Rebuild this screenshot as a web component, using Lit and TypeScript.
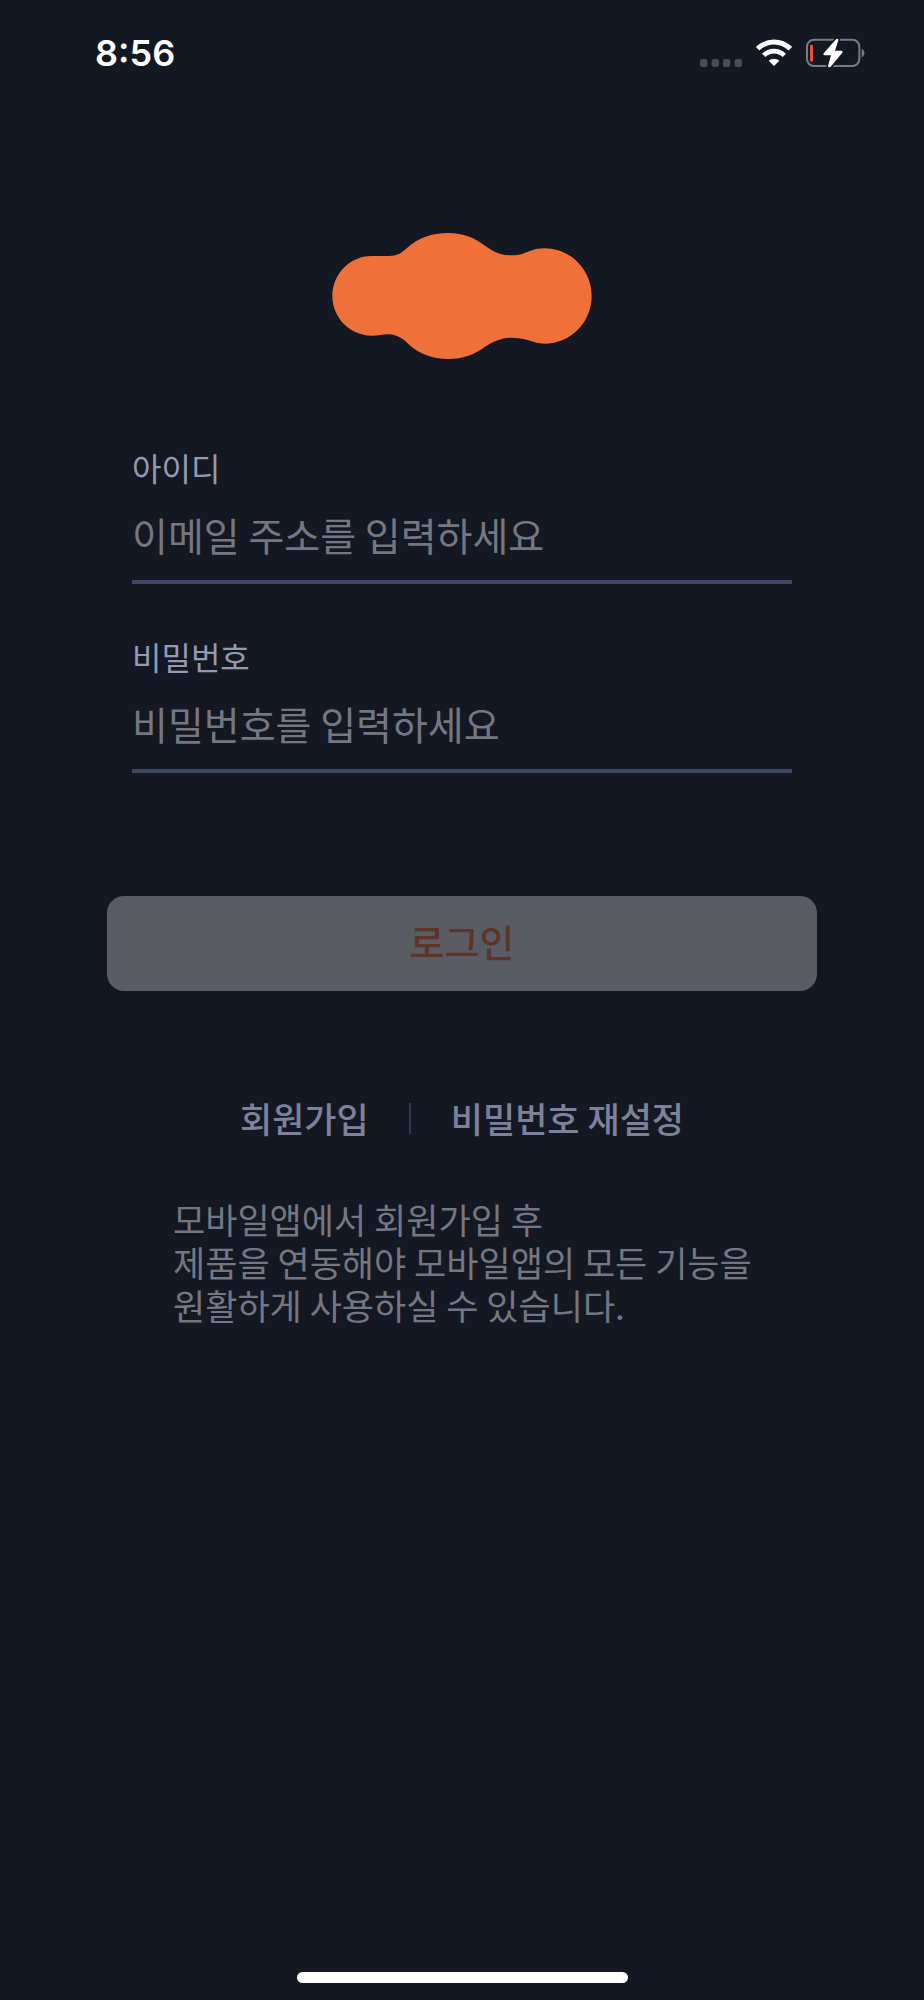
import { LitElement, html, css } from "lit";
import { customElement } from "lit/decorators.js";

@customElement("status-bar")
class StatusBar extends LitElement {
  static styles = css`
    :host {
      display: flex;
      align-items: center;
      justify-content: space-between;
      height: 104px;
      padding: 0 59px 0 95px;
      color: #fff;
    }
    .time {
      padding-top: 2px;
      font: 600 36px/44px Inter, "Liberation Sans", sans-serif;
    }
    .icons {
      display: flex;
      align-items: center;
      gap: 14px;
      padding-top: 1px;
    }
    svg {
      display: block;
    }
    .signal {
      margin-top: 20px;
    }
  `;
  render() {
    return html`
      <time class="time">8:56</time>
      <div class="icons">
        <svg class="signal" width="42" height="8" viewBox="0 0 126 24" fill="#4a4c56" aria-hidden="true">
          <rect width="22" height="24" rx="7" />
          <rect x="35" width="22" height="24" rx="7" />
          <rect x="69" width="22" height="24" rx="7" />
          <rect x="104" width="22" height="24" rx="7" />
        </svg>
        <svg width="36" height="28" viewBox="0 0 108 84" fill="none" stroke="#fff" aria-hidden="true">
          <path d="M5 29C33 2 75 2 103 29" stroke-width="15" />
          <path d="M23 49C41 32 67 32 85 49" stroke-width="14" />
          <path d="M38 65C47 57 61 57 70 65L54 81Z" fill="#fff" stroke="none" />
        </svg>
        <svg width="59" height="30" viewBox="0 0 177 90" fill="none" aria-hidden="true">
          <rect x="3" y="5" width="157" height="79" rx="21" stroke="#797b82" stroke-width="6" />
          <path d="M167 32C178 36 178 54 167 58Z" fill="#797b82" />
          <rect x="12" y="20" width="9" height="51" rx="4" fill="#ea4e3d" />
          <path d="M90 4L53 46Q50 51 55 52H75L66 84Q67 90 74 86L109 44Q112 39 107 38H87L97 7Q96 0 90 4Z" fill="#fff" stroke="#141822" stroke-width="10" paint-order="stroke" stroke-linejoin="round" />
        </svg>
      </div>
    `;
  }
}

@customElement("app-root")
class AppRoot extends LitElement {
  static styles = css`
    :host {
      display: flex;
      flex-direction: column;
      min-height: 100vh;
      box-sizing: border-box;
      background: #141822;
      font-family: "Noto Sans CJK KR", sans-serif;
    }
    main {
      display: flex;
      flex-direction: column;
      flex: 1;
      padding: 129px 107px 0;
    }
    .logo {
      display: block;
      align-self: center;
      margin-bottom: 86px;
    }
    form {
      display: flex;
      flex-direction: column;
    }
    .fields {
      display: grid;
      gap: 50px;
      padding: 0 25px;
      margin-bottom: 123px;
    }
    .field {
      display: flex;
      flex-direction: column;
      gap: 21px;
    }
    label {
      font-size: 32px;
      line-height: 44px;
      color: #959ab4;
    }
    input {
      width: 100%;
      height: 74px;
      box-sizing: border-box;
      padding: 0 0 22px;
      border: 0;
      border-bottom: 4px solid #3b4763;
      border-radius: 0;
      outline: 0;
      background: none;
      color: #fff;
      font: inherit;
      font-size: 39px;
    }
    input::placeholder {
      color: #747782;
      opacity: 1;
    }
    button {
      height: 95px;
      padding: 0 0 7px;
      border: 0;
      border-radius: 17px;
      background: #5a5c64;
      color: #5c3528;
      font: inherit;
      font-size: 38px;
      font-weight: 500;
    }
    nav {
      display: flex;
      align-items: center;
      justify-content: center;
      gap: 40px;
      margin: 102px 0 54px;
    }
    a {
      color: #7c819c;
      font-size: 35px;
      font-weight: 500;
      line-height: 50px;
      text-decoration: none;
    }
    .divider {
      width: 2px;
      height: 31px;
      background: #2f3957;
    }
    .note {
      margin: 0;
      padding: 0 60px 0 66px;
      color: #747782;
      font-size: 35px;
      line-height: 43px;
    }
    .home {
      align-self: center;
      width: 331px;
      height: 11px;
      margin-bottom: 17px;
      border-radius: 6px;
      background: #fff;
    }
  `;
  render() {
    return html`
      <status-bar></status-bar>
      <main>
        <svg class="logo" width="260" height="126" viewBox="37 39 778 378" aria-hidden="true">
          <path
            fill="#ef7139"
            d="M155 108C175 107 190 109 207 108C235 107 245 98 262 83C295 54 335 39 384 39C430 39 465 54 495 77C525 99 548 106 576 106C600 106 612 99 630 93C645 87 658 85 673 85C752 85 815 149 815 228C815 307 752 371 673 371C657 371 642 367 625 361C610 356 592 353 574 353C545 353 520 364 495 380C465 402 430 417 384 417C335 417 297 401 265 372C250 357 232 344 205 343C190 342 175 347 155 347C90 347 37 293 37 228C37 162 90 108 155 108Z"
          />
        </svg>
        <form>
          <div class="fields">
            <div class="field">
              <label for="email">아이디</label>
              <input id="email" type="email" placeholder="이메일 주소를 입력하세요" />
            </div>
            <div class="field">
              <label for="password">비밀번호</label>
              <input id="password" type="password" placeholder="비밀번호를 입력하세요" />
            </div>
          </div>
          <button type="submit" disabled>로그인</button>
        </form>
        <nav>
          <a href="#signup">회원가입</a>
          <span class="divider"></span>
          <a href="#reset">비밀번호 재설정</a>
        </nav>
        <p class="note">모바일앱에서 회원가입 후<br />제품을 연동해야 모바일앱의 모든 기능을<br />원활하게 사용하실 수 있습니다.</p>
      </main>
      <div class="home"></div>
    `;
  }
}
